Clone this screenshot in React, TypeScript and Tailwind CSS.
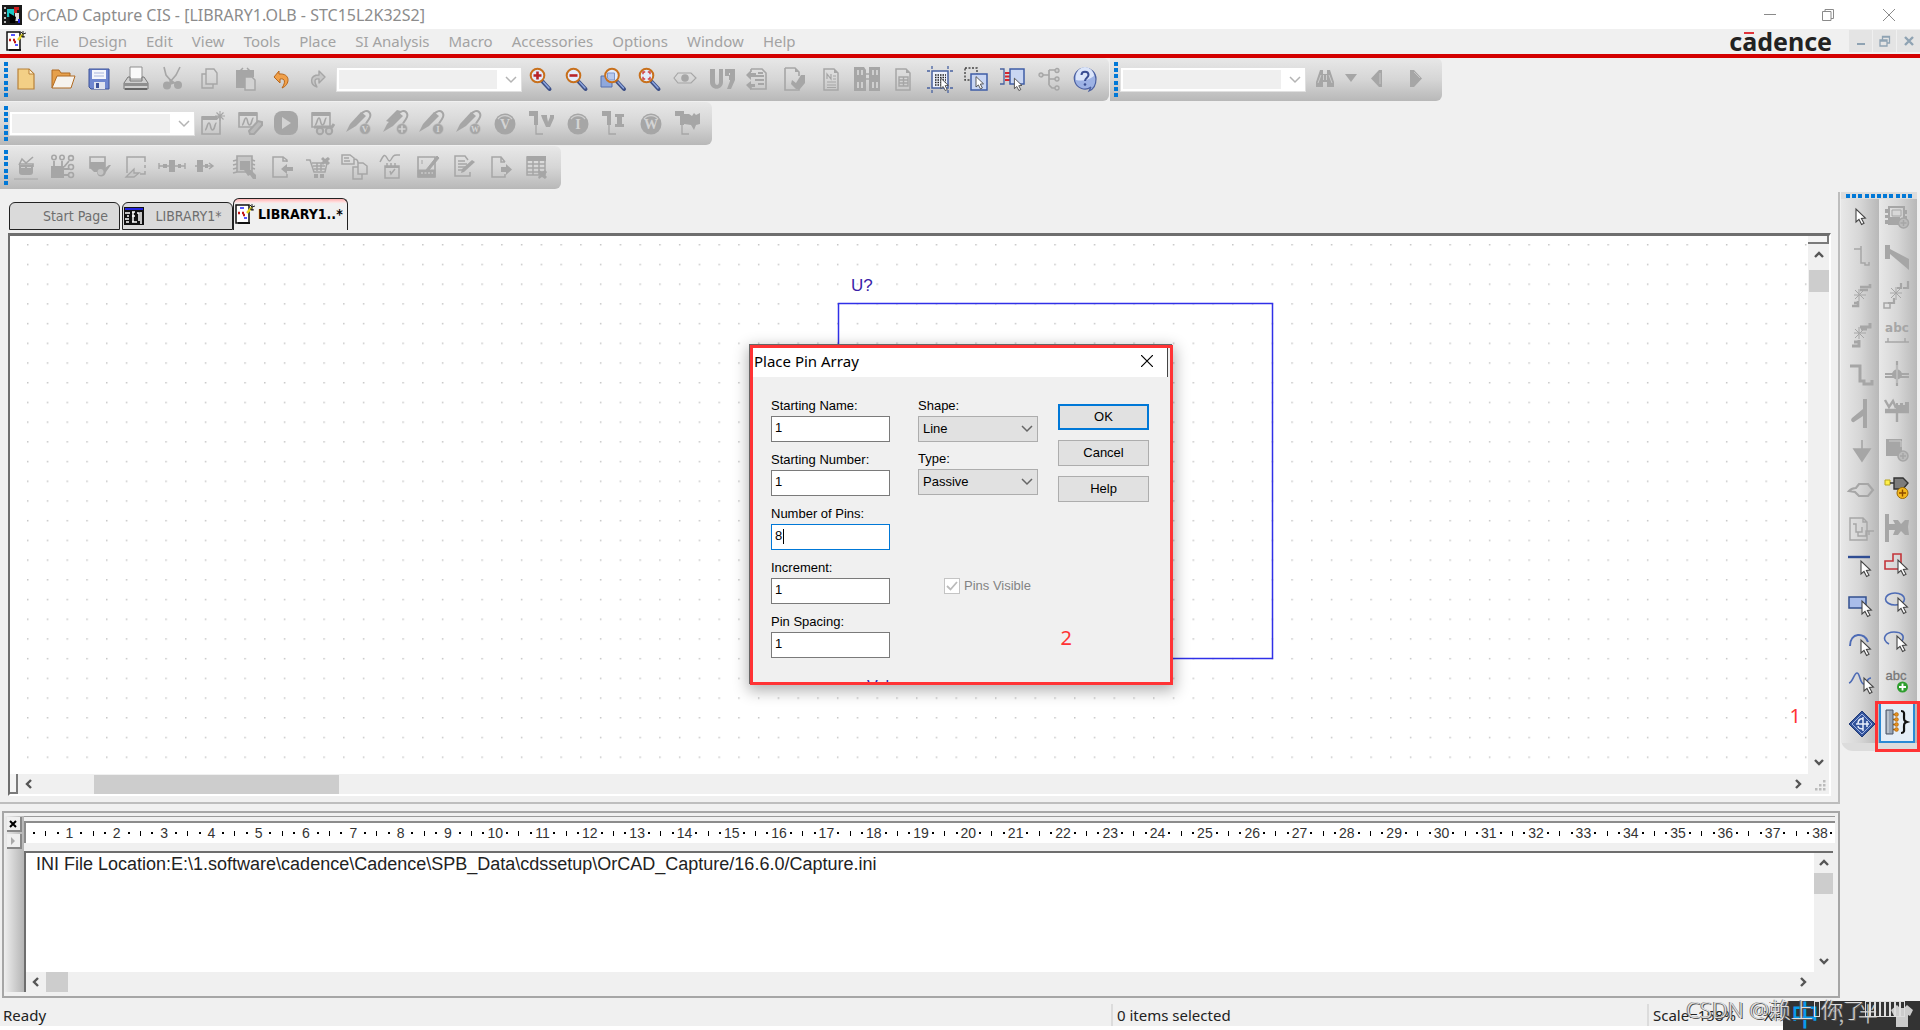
import { useState, type ReactNode } from 'react';

const MENU_ITEMS = [
  'File',
  'Design',
  'Edit',
  'View',
  'Tools',
  'Place',
  'SI Analysis',
  'Macro',
  'Accessories',
  'Options',
  'Window',
  'Help',
];

const GRAY = '#a6a6a6';

interface Tool {
  name: string;
  art: ReactNode;
}

const Cursor = ({ x = 10, y = 8 }: { x?: number; y?: number }) => (
  <path
    d="M0 0v13l3-2.6 2.6 5 2.4-1.2-2.6-4.8 4-.4z"
    transform={`translate(${x} ${y})`}
    fill="#fff"
    stroke="#444"
    strokeWidth="1.1"
  />
);

const Glyph = ({ x, y, size, fill, children }: { x: number; y: number; size: number; fill: string; children: string }) => (
  <text x={x} y={y} fontSize={size} fill={fill} textAnchor="middle" fontWeight="bold" fontFamily="Liberation Serif, serif">
    {children}
  </text>
);

const Magnifier = ({ children }: { children?: ReactNode }) => (
  <>
    <path d="M14.5 14.5l7 7.5" stroke="#3c4f86" strokeWidth="4" strokeLinecap="round" />
    <path d="M15.5 15l5.5 6" stroke="#8ea6de" strokeWidth="1.5" strokeLinecap="round" />
    <circle cx="9.5" cy="8.5" r="6.8" fill="#e3ecfb" stroke="#c8701c" strokeWidth="2" />
    {children}
  </>
);

const Probe = ({ children }: { children: ReactNode }) => (
  <>
    <path d="M-1 21l4-8L14 1l5 4L9 15z" fill={GRAY} />
    <path d="M14 3c3-3 6-4 8-2s2 4 0 7l-4 6" fill="none" stroke={GRAY} strokeWidth="2" />
    <circle cx="18" cy="18" r="5.5" fill={GRAY} stroke="#c9c9c9" strokeWidth=".6" />
    {children}
  </>
);

const BiasTip = ({ children }: { children: ReactNode }) => (
  <>
    <path d="M-1 0h9v14H4V5h-5z" fill={GRAY} />
    <path d="M6 13v10h7" fill="none" stroke={GRAY} strokeWidth="1.3" />
    {children}
  </>
);

const Coin = ({ letter }: { letter: string }) => (
  <>
    <circle cx="12" cy="13" r="10.5" fill={GRAY} />
    <path d="M5 8a9 9 0 0114 0" fill="none" stroke="#cfcfcf" strokeWidth="1.2" />
    <Glyph x={12} y={18} size={14} fill="#d4d4d4">
      {letter}
    </Glyph>
  </>
);

const Wave = ({ x = 0, y = 0 }: { x?: number; y?: number }) => (
  <path
    d="M0 8c2 0 2-7 4-7s1 7 3.5 7 2-7 4-7"
    transform={`translate(${x} ${y})`}
    fill="none"
    stroke={GRAY}
    strokeWidth="1.6"
  />
);

const FILE_TOOLS: Tool[] = [
  {
    name: 'New',
    art: (
      <>
        <path d="M4 2h11l5 5v15H4z" fill="#f3cf86" stroke="#b8813a" strokeWidth="1.2" />
        <path d="M15 2v5h5z" fill="#fff1cf" stroke="#b8813a" />
      </>
    ),
  },
  {
    name: 'Open',
    art: (
      <>
        <path d="M1 21V3h7l2 3h9v6" fill="#e6a04c" stroke="#b06a22" />
        <path d="M1 21L6 9h18l-4 12z" fill="#f6f3ee" stroke="#b06a22" />
      </>
    ),
  },
  {
    name: 'Save',
    art: (
      <>
        <path d="M2 2h20v20H4l-2-2z" fill="#6f87cf" stroke="#3c529a" />
        <path d="M5 3h14v9H5z" fill="#f4f6fc" />
        <path d="M7 6h10M7 9h10" stroke="#a9b6dd" />
        <path d="M7 15h11v7H7z" fill="#dfe3ef" />
        <path d="M9 16h3v5H9z" fill="#3c529a" />
      </>
    ),
  },
  {
    name: 'Print',
    art: (
      <>
        <path d="M6 0h12v12H6z" fill="#fafafa" stroke="#8f8f8f" />
        <path d="M4 10l-4 6v6h24v-6l-4-6h-2v4H6v-4z" fill="#cfcfcf" stroke="#777" />
        <path d="M0 16h24v3H0z" fill="#8f8f8f" />
        <path d="M1 22h22" stroke="#666" strokeWidth="2" />
      </>
    ),
  },
  {
    name: 'Cut',
    art: (
      <>
        <path d="M4 0l2 8 6 7M20 0l-4 8-6 7" fill="none" stroke={GRAY} strokeWidth="1.6" />
        <circle cx="7" cy="18.5" r="4" fill={GRAY} />
        <circle cx="18" cy="18" r="4" fill={GRAY} />
        <path d="M9 11l7 5-6 2z" fill={GRAY} />
      </>
    ),
  },
  {
    name: 'Copy',
    art: (
      <>
        <path d="M10 2h8l3 4v11H10z" fill="none" stroke={GRAY} strokeWidth="1.4" />
        <path d="M10 7H6v14h11v-4" fill="none" stroke={GRAY} strokeWidth="1.4" />
      </>
    ),
  },
  {
    name: 'Paste',
    art: (
      <>
        <path d="M3 3h18v7h-9v11H3z" fill={GRAY} />
        <path d="M7 4l3-3M17 4l-3-3" stroke={GRAY} strokeWidth="1.5" />
        <path d="M12 10h7l3 3v10H12z" fill="#d2d2d2" stroke={GRAY} strokeWidth="1.5" />
      </>
    ),
  },
  {
    name: 'Undo',
    art: (
      <path
        d="M10 4L5 10l6 6v-4c5-1 6 3 2 9 8-3 9-15-3-14z"
        fill="#f0a04a"
        stroke="#b8661a"
        strokeLinejoin="round"
      />
    ),
  },
  {
    name: 'Redo',
    art: (
      <path
        d="M13 4l6 6-6 6v-4c-5-1-5 3-2 8C4 18 3 8 13 8z"
        fill="#c6c6c6"
        stroke={GRAY}
        strokeWidth="1.4"
        strokeLinejoin="round"
      />
    ),
  },
];

const VIEW_TOOLS: Tool[] = [
  {
    name: 'Zoom in',
    art: (
      <Magnifier>
        <path d="M5.5 8.5h8M9.5 4.5v8" stroke="#b82328" strokeWidth="2.6" />
      </Magnifier>
    ),
  },
  {
    name: 'Zoom out',
    art: (
      <Magnifier>
        <path d="M5.5 8.5h8" stroke="#b82328" strokeWidth="2.6" />
      </Magnifier>
    ),
  },
  {
    name: 'Zoom to region',
    art: (
      <>
        <path d="M0 9h11v11H0z" fill="#8fa8dc" stroke="#5770ae" />
        <g transform="translate(1.5 0)">
          <Magnifier>
            <path d="M5 6h7v7H7a6 6 0 01-2-2z" fill="#b7c9ee" stroke="#7f97cc" />
          </Magnifier>
        </g>
      </>
    ),
  },
  {
    name: 'Zoom to all',
    art: (
      <Magnifier>
        <path d="M6 7.2V5h2.2M10.8 5H13v2.2M13 9.800V12h-2.200M8.200 12H6V9.800" fill="none" stroke="#d0393e" strokeWidth="1.4" />
      </Magnifier>
    ),
  },
  {
    name: 'Fisheye view',
    art: (
      <>
        <path d="M1 11l4-5h13l5 5-5 5H5z" fill="none" stroke={GRAY} strokeWidth="1.2" />
        <circle cx="12" cy="11" r="3.8" fill={GRAY} />
      </>
    ),
  },
  {
    name: 'Annotate',
    art: (
      <path
        d="M0 2h5v13c0 4 4 4 4 0V2h4v13c0 9-13 9-13 0zM15 2h10v11l-4 9h-4l3-8v-1h-1V8h1V6h-1v3h-4z"
        fill={GRAY}
      />
    ),
  },
  {
    name: 'Back annotate',
    art: (
      <>
        <path d="M5 2h11l4 4v16H5v-3M5 2v3" fill="none" stroke={GRAY} strokeWidth="1.6" />
        <path d="M0 8l5-5v3h5v4H5v3zM0 18l5-4v3h4v3H5v3z" fill={GRAY} />
        <path d="M9 9h9M12 6h5M9 13h9M12 17h6" stroke={GRAY} strokeWidth="2" />
      </>
    ),
  },
  {
    name: 'Design rules check',
    art: (
      <>
        <path d="M3 1h10l4 4v4M3 1v22h14v-3" fill="none" stroke={GRAY} strokeWidth="1.6" />
        <path d="M13 1v4h4z" fill={GRAY} />
        <path d="M10 13l4 3 5-8 4 0v8l-5 6h-4l-5-5z" fill={GRAY} />
      </>
    ),
  },
  {
    name: 'Create netlist',
    art: (
      <>
        <path d="M5 2h10l4 4v17H5z" fill="none" stroke={GRAY} strokeWidth="1.5" />
        <path d="M15 2v4h4z" fill={GRAY} />
        <path d="M8 12V7l4 5V7M14 9h3M14 12h3M8 15h9M8 18h9M8 20.5h9" fill="none" stroke={GRAY} strokeWidth="1.2" />
      </>
    ),
  },
  {
    name: 'Cross reference parts',
    art: (
      <>
        <path d="M-1 0h10l2 3v21H-1zM14 0h11v24H14z" fill={GRAY} />
        <path d="M2 3h2v5H2zM6 3h2v5H6zM2 15h2v6H2zM6 15h2v6H6zM17 3h2v5h-2zM21 3h2v5h-2zM17 15h2v6h-2zM21 15h2v6h-2z" fill="#cfcfcf" />
        <path d="M10 7h4M10 12h4" stroke={GRAY} strokeWidth="1.3" />
      </>
    ),
  },
  {
    name: 'Bill of materials',
    art: (
      <>
        <path d="M5 2h10l4 4v17H5z" fill="none" stroke={GRAY} strokeWidth="1.5" />
        <path d="M15 2v4h4z" fill={GRAY} />
        <path d="M8 10h9v9H8zM8 13h9M8 16h9M12.5 10v9" fill="none" stroke={GRAY} strokeWidth="1.4" />
      </>
    ),
  },
  {
    name: 'Snap to grid',
    art: (
      <>
        <path d="M4-1v3M4 23v3M20-1v3M20 23v3M-1 4h3M22 4h3M-1 21h3M22 21h3" stroke="#4862a0" strokeWidth="1.3" />
        <path d="M4 4h16v17H4z" fill="#eef2fb" stroke="#4862a0" strokeWidth="1.5" />
        <path d="M7 8h11M7 10.5h11M7 13h11M7 15.5h11M7 18h11" stroke="#222" strokeWidth="1.5" strokeDasharray="1.5 1" />
        <g transform="scale(.8)">
          <Cursor x={16} y={14} />
        </g>
      </>
    ),
  },
  {
    name: 'Area select',
    art: (
      <>
        <path d="M1 1h12v12H1z" fill="none" stroke="#444" strokeWidth="1.4" strokeDasharray="2 1.5" />
        <path d="M7 7h16v16H7z" fill="#c9d6f3" stroke="#3f5da6" strokeWidth="1.5" />
        <g transform="scale(.8)">
          <Cursor x={15} y={12} />
        </g>
      </>
    ),
  },
  {
    name: 'Drag connected object',
    art: (
      <>
        <path d="M0 2h4v15H0" fill="none" stroke="#4862a0" strokeWidth="1.3" />
        <path d="M5 6h5M5 9.5h5M5 13h5" stroke="#d8252b" strokeWidth="2" />
        <path d="M10 2h14v15H10z" fill="#c9d6f3" stroke="#3f5da6" strokeWidth="1.5" />
        <g transform="scale(.8)">
          <Cursor x={18} y={14} />
        </g>
      </>
    ),
  },
  {
    name: 'Project manager',
    art: (
      <>
        <path d="M5 8h7M12 3v15M12 3h8M12 12h8M12 18l3 3h5" fill="none" stroke={GRAY} strokeWidth="1.7" />
        <g fill="#ccc" stroke={GRAY} strokeWidth="1.3">
          <circle cx="4" cy="8" r="2" />
          <circle cx="20" cy="3.5" r="2" />
          <circle cx="20" cy="12" r="2" />
          <circle cx="20" cy="21" r="2" />
        </g>
      </>
    ),
  },
  {
    name: 'Help topics',
    art: (
      <>
        <path d="M12 1a10.5 10.5 0 106 19l-2 4c5-2 7-7 7-12A11 11 0 0012 1z" fill="#9db2e4" stroke="#4a5fa0" strokeWidth="1.2" />
        <path d="M3 9a9 9 0 0118 0 22 22 0 01-18 4z" fill="#dbe5fa" />
        <path d="M8.500 8c0-4.500 7-4.500 7 0 0 2.500-3.500 3-3.500 6" fill="none" stroke="#3a4e92" strokeWidth="2" />
        <circle cx="12" cy="17.5" r="1.3" fill="#3a4e92" />
      </>
    ),
  },
];

const SIM_TOOLS: Tool[] = [
  {
    name: 'New simulation profile',
    art: (
      <>
        <path d="M1 6h18v17H1z" fill="none" stroke={GRAY} strokeWidth="1.6" />
        <path d="M1 5h15v4H1z" fill={GRAY} />
        <Wave x={4} y={11} />
        <path d="M19 0v10M14 5h10M15.5 1.5l7 7M22.5 1.5l-7 7" stroke={GRAY} strokeWidth="1.1" />
      </>
    ),
  },
  {
    name: 'Edit simulation profile',
    art: (
      <>
        <path d="M1 2h18v14H1z" fill="none" stroke={GRAY} strokeWidth="1.6" />
        <path d="M1 1h18v4H1z" fill={GRAY} />
        <Wave x={4} y={6} />
        <path d="M11 20L20 10l4 1v3l-8 9h-4z" fill="#b9b9b9" stroke={GRAY} strokeWidth="2" />
      </>
    ),
  },
  {
    name: 'Run PSpice',
    art: (
      <>
        <rect x="0" y="0" width="24" height="24" rx="8" fill={GRAY} />
        <path d="M8 6v12l9-6z" fill="#d2d2d2" />
      </>
    ),
  },
  {
    name: 'View simulation results',
    art: (
      <>
        <path d="M1 2h18v14H1z" fill="none" stroke={GRAY} strokeWidth="1.6" />
        <path d="M1 1h18v4H1z" fill={GRAY} />
        <Wave x={4} y={6} />
        <path d="M3 16h18l2-3" fill="none" stroke={GRAY} strokeWidth="3" />
        <circle cx="9" cy="20" r="3.2" fill="#c4c4c4" stroke={GRAY} strokeWidth="2" />
        <circle cx="18" cy="20" r="3.2" fill="#c4c4c4" stroke={GRAY} strokeWidth="2" />
      </>
    ),
  },
  {
    name: 'Voltage marker',
    art: (
      <Probe>
        <Glyph x={18} y={21} size={9} fill="#d4d4d4">
          V
        </Glyph>
      </Probe>
    ),
  },
  {
    name: 'Voltage differential marker',
    art: (
      <>
        <path d="M2 10L13-1l4 1-9 12z" fill={GRAY} />
        <Probe>
          <path d="M14.5 18h7M18 14.5v7" stroke="#d4d4d4" strokeWidth="1.6" />
        </Probe>
      </>
    ),
  },
  {
    name: 'Current marker',
    art: (
      <Probe>
        <Glyph x={18} y={21} size={9} fill="#d4d4d4">
          I
        </Glyph>
      </Probe>
    ),
  },
  {
    name: 'Power marker',
    art: (
      <Probe>
        <Glyph x={18} y={21} size={8} fill="#d4d4d4">
          W
        </Glyph>
      </Probe>
    ),
  },
  { name: 'Enable bias voltage display', art: <Coin letter="V" /> },
  {
    name: 'Toggle voltage on net',
    art: (
      <BiasTip>
        <path d="M11 4h6v2l1 5 2-5V4h4v3l-4 9h-4L12 7z" fill={GRAY} />
      </BiasTip>
    ),
  },
  { name: 'Enable bias current display', art: <Coin letter="I" /> },
  {
    name: 'Toggle current on pin',
    art: (
      <BiasTip>
        <path d="M12 3h9v3h-2v7h2v3h-9v-3h2V6h-2z" fill={GRAY} />
      </BiasTip>
    ),
  },
  { name: 'Enable bias power display', art: <Coin letter="W" /> },
  {
    name: 'Toggle power on part',
    art: (
      <BiasTip>
        <path d="M8 3h5l3 2 2-3 2 2 4-2v11l-4 1-2 5-3-5-7-1z" fill={GRAY} />
      </BiasTip>
    ),
  },
];

const PART_TOOLS: Tool[] = [
  {
    name: 'Place database part',
    art: (
      <>
        <path d="M5 10h14v7a3 3 0 01-3 3H8a3 3 0 01-3-3z" fill={GRAY} />
        <path d="M5 10l3-6 4 4 7-6M6 9h13v3" fill="none" stroke={GRAY} strokeWidth="1.6" />
        <path d="M7 12.5h4M13 12.5h4" stroke="#cfcfcf" />
        <path d="M0 24h24" stroke={GRAY} />
      </>
    ),
  },
  {
    name: 'Part manager',
    art: (
      <>
        <path d="M0 11h13v12H0z" fill={GRAY} />
        <path d="M3 11V6M11 11V6M18 6l-5 6M13 14h5M13 20h5" stroke={GRAY} strokeWidth="1.8" />
        <g fill="none" stroke={GRAY} strokeWidth="1.6">
          <circle cx="3" cy="2.5" r="2.2" />
          <circle cx="11" cy="2.5" r="2.2" />
          <circle cx="20" cy="3" r="2.4" />
          <circle cx="20" cy="12" r="2.5" />
          <circle cx="20" cy="20" r="2.5" />
        </g>
      </>
    ),
  },
  {
    name: 'Update part status',
    art: (
      <>
        <path d="M3 2h15v11H3z" fill="none" stroke={GRAY} strokeWidth="1.6" />
        <path d="M3 7h15v6l4-3h2l-5 7c-1 6-9 6-9 0H7l-4-4z" fill={GRAY} />
        <circle cx="13.500" cy="17" r="3" fill="#c4c4c4" />
      </>
    ),
  },
  {
    name: 'Derive database part',
    art: (
      <>
        <path d="M3 18V2h18v5M21 10v3M21 16v3h-5" fill="none" stroke={GRAY} strokeWidth="1.5" />
        <path d="M2 22l8-8v4h5l-5 4z" fill="#c6c6c6" stroke={GRAY} strokeWidth="1.3" />
      </>
    ),
  },
  {
    name: 'Link database part',
    art: (
      <>
        <path d="M-1 8v6M25 8v6M-1 11h26" stroke={GRAY} strokeWidth="1.4" />
        <path d="M9 5h6v12H9zM3 9h4v4H3zM18 9h3v4h-3z" fill={GRAY} />
      </>
    ),
  },
  {
    name: 'View database part',
    art: (
      <>
        <path d="M-2 11h17M12 8l4 3-4 3" fill="none" stroke={GRAY} strokeWidth="1.4" />
        <path d="M0 5h6v12H0zM8 9h3v4H8z" fill={GRAY} />
      </>
    ),
  },
  {
    name: 'Synchronize part',
    art: (
      <>
        <path d="M4 1h15v16H4z" fill="#c6c6c6" stroke={GRAY} strokeWidth="1.6" />
        <path d="M7 6h10v9H7z" fill={GRAY} />
        <path d="M0 6l4-1M0 10l4-1M0 14l4-1M0 18l4-1M19 5l3 1M19 9l3 1M19 13l3 1" stroke={GRAY} strokeWidth="1.8" />
        <path d="M11 15h7l5 5v4h-3l-3-4-2 1z" fill={GRAY} />
      </>
    ),
  },
  {
    name: 'Import part',
    art: (
      <>
        <path d="M17 7V5l-4-3H3v20h14v-3M13 2v4h4" fill="none" stroke={GRAY} strokeWidth="1.5" />
        <path d="M11 14l6-5v3h6v4h-6v3z" fill={GRAY} />
      </>
    ),
  },
  {
    name: 'Part cart',
    art: (
      <>
        <path d="M0 5h4l4 12h11l2-9H6M7 11h12M8 14h11M11 8v8M15 8v8" fill="none" stroke={GRAY} strokeWidth="1.5" />
        <path d="M8 19h4v4H8zM14 19h4v4h-4zM17 2l2 2 3-2 2 2-2 2 2 2-2 2-3-2-2 2-2-2 2-2-2-2z" fill={GRAY} />
      </>
    ),
  },
  {
    name: 'Copy properties',
    art: (
      <>
        <path d="M0 0h8l4 3v6H0zM2 3h5M2 6h6M12 4c3 0 4 2 4 4" fill="none" stroke={GRAY} strokeWidth="1.5" />
        <path d="M16 8h5l4 3v8h-9zM16 12h-5v12h9v-5" fill="none" stroke={GRAY} strokeWidth="1.5" />
      </>
    ),
  },
  {
    name: 'Check signal',
    art: (
      <>
        <path d="M1 7c4-8 5-8 7-4s3 4 5 0 4-3 8-3" fill="none" stroke={GRAY} strokeWidth="1.5" />
        <path d="M6 11h14v12H6zM11 16l1 3 4-5" fill="none" stroke={GRAY} strokeWidth="1.5" />
        <path d="M6 11h14v2H6z" fill={GRAY} />
        <path d="M8 8v4M12 8v4M16 8v4" stroke={GRAY} strokeWidth="1.500" />
      </>
    ),
  },
  {
    name: 'Edit drawing',
    art: (
      <>
        <path d="M3 2h17v20H3z" fill="none" stroke={GRAY} strokeWidth="1.6" />
        <path d="M7 5v4M3 15h8L22 1l2 2-10 12h6v7H3z" fill={GRAY} stroke={GRAY} />
        <path d="M6 18h12" stroke="#c9c9c9" strokeWidth="1.3" strokeDasharray="2 1.5" />
      </>
    ),
  },
  {
    name: 'Edit notes',
    art: (
      <>
        <path d="M16 5l-3-4H3v20h15v-4M6 6h7M6 9h9M6 12h7M6 15h5" fill="none" stroke={GRAY} strokeWidth="1.5" />
        <path d="M9 18l1-4L20 5l3 2-11 10z" fill={GRAY} />
      </>
    ),
  },
  {
    name: 'Export part',
    art: (
      <>
        <path d="M17 7l-4-5H4v20h13v-3M13 2v5h4" fill="none" stroke={GRAY} strokeWidth="1.5" />
        <path d="M13 12h5V9l6 5.5-6 5.5v-3h-5z" fill={GRAY} />
      </>
    ),
  },
  {
    name: 'Parts table',
    art: (
      <>
        <path d="M2 2h18v18H2zM2 9h18M2 13h18M2 17h18M8 4v16M14 4v16" fill="none" stroke={GRAY} strokeWidth="1.5" />
        <path d="M2 1h19v5H2zM14 15l3 2 3-2 2 2-2 3 2 2-2 2-3-2-3 2-1-2 2-2-2-3z" fill={GRAY} />
      </>
    ),
  },
];

const SEARCH_TOOLS: Tool[] = [
  {
    name: 'Find',
    art: (
      <>
        <path d="M7 3h3v4h4V3h3l4 12v5h-7v-5h-4v5H3v-5z" fill={GRAY} />
        <path d="M8 8l-3 8M16 8l3 8M10.500 8v5M13.500 8v5" stroke="#ccc" />
      </>
    ),
  },
  { name: 'Find options', art: <path d="M6 7h12l-6 8z" fill={GRAY} /> },
  {
    name: 'Previous',
    art: (
      <>
        <path d="M17 3v17h-3l-8-8.500L14 3z" fill={GRAY} />
        <path d="M15 6v11" stroke="#c6c6c6" />
      </>
    ),
  },
];

const NEXT_TOOL: Tool[] = [
  {
    name: 'Next',
    art: (
      <>
        <path d="M6 3v17h4l8-8.500L10 3z" fill={GRAY} />
        <path d="M10 5l6 6" stroke="#c6c6c6" />
      </>
    ),
  },
];

const DRAW_TOOLS: [Tool, Tool][] = [
  [
    { name: 'Select', art: <Cursor x={6} y={3} /> },
    {
      name: 'Place part',
      art: (
        <>
          <path d="M4 1h15v17H4z" fill="none" stroke={GRAY} strokeWidth="2" />
          <path d="M7 4h9v6H7z" fill="#d8d8d8" stroke={GRAY} />
          <path d="M0 3h3v4H0zM0 9h3v3H0zM0 14h3v4H0zM4 11h11v8H4zM19 4h3v4h-3zM19 10h3v3h-3z" fill={GRAY} />
          <circle cx="18.5" cy="17" r="5" fill="#bbb" stroke={GRAY} strokeWidth="1.6" />
          <path d="M15.5 17h6M18.5 14v6" stroke={GRAY} strokeWidth="1.5" />
        </>
      ),
    },
  ],
  [
    { name: 'Place wire', art: <path d="M4 4h7V1M11 4v14h4v2h4v-3" fill="none" stroke={GRAY} strokeWidth="1.5" /> },
    { name: 'Auto wire', art: <path d="M0 0h5v4l19 10v11L5 9v5H0z" fill={GRAY} /> },
  ],
  [
    {
      name: 'Auto wire two points',
      art: (
        <>
          <path d="M10 3h10V0M10 6h8M2 22h6v-5M4 19h4" fill="none" stroke={GRAY} strokeWidth="2.6" />
          <path d="M9 5v12M4 11h12M5 6l9 9M14 6l-9 9" stroke={GRAY} />
        </>
      ),
    },
    {
      name: 'Auto wire to bus',
      art: (
        <>
          <path d="M12 5h4V0M18 5h5v-7M3 20h6v-5" fill="none" stroke={GRAY} strokeWidth="2.200" />
          <path d="M-1 20h6v5h-6z" fill="none" stroke={GRAY} strokeWidth="1.500" />
          <path d="M11 4v13M5 10h12M6 5l10 10M16 5L6 15" stroke={GRAY} />
        </>
      ),
    },
  ],
  [
    {
      name: 'Auto wire multiple',
      art: (
        <>
          <path d="M10 4h10V0M11 6h6M2 23h7v-6M4 19h6" fill="none" stroke={GRAY} strokeWidth="3" />
          <path d="M9 4v12M4 10h12M5 6l9 9M14 6l-9 9" stroke={GRAY} />
        </>
      ),
    },
    {
      name: 'Place net alias',
      art: (
        <>
          <text x="12" y="10" fontSize="12" fontWeight="bold" textAnchor="middle" fill={GRAY} fontFamily="DejaVu Sans, sans-serif">
            abc
          </text>
          <path d="M0 20h24M3 16v4M20 16v4" stroke={GRAY} strokeWidth="1.4" />
        </>
      ),
    },
  ],
  [
    { name: 'Place bus', art: <path d="M0 4h10v15h4v3h8v-4" fill="none" stroke={GRAY} strokeWidth="3" /> },
    {
      name: 'Place junction',
      art: (
        <>
          <path d="M0 13h24M0 16h24M12 0v25" stroke={GRAY} strokeWidth="2.2" />
          <circle cx="12" cy="13.5" r="5" fill={GRAY} />
          <path d="M12 4v18" stroke="#ccc" />
        </>
      ),
    },
  ],
  [
    { name: 'Place bus entry', art: <path d="M13-2h4v29h-4V15L4 21c-2 1-4-2-2-4L13 8z" fill={GRAY} /> },
    {
      name: 'Place net group',
      art: (
        <>
          <path d="M0 1l4 7 4-6 3 7M0 11h24M0 13h24M12 13v10" fill="none" stroke={GRAY} strokeWidth="2.4" />
          <path d="M11 4h2v2h2V4h3v2h2V3h4v7H11z" fill={GRAY} />
        </>
      ),
    },
  ],
  [
    { name: 'Place power', art: <path d="M12 0v9M4 9h16l-8 12z" fill={GRAY} stroke={GRAY} strokeWidth="1.6" /> },
    {
      name: 'Place ground',
      art: (
        <>
          <path d="M1 1h16v17H1z" fill={GRAY} />
          <path d="M4 3h12v6" stroke="#ccc" fill="none" />
          <circle cx="18" cy="18" r="5" fill="#bbb" stroke={GRAY} strokeWidth="1.6" />
          <path d="M15 18h6M18 15v6" stroke={GRAY} strokeWidth="1.5" />
        </>
      ),
    },
  ],
  [
    {
      name: 'Place hierarchical block',
      art: <path d="M-1 13c2-2 4-3 7-3l3-4h9l5 6-5 6H9l-4-4z" fill="none" stroke={GRAY} strokeWidth="2.2" />,
    },
    {
      name: 'Place pin',
      art: (
        <>
          <path d="M0 4h5v5H0z" fill="#fff04a" stroke="#b8a51e" />
          <path d="M5 7h4" stroke="#333" strokeWidth="1.5" />
          <path d="M9 2h9l5 5-5 6H9z" fill="#7c7c7c" stroke="#333" strokeWidth="1.4" />
          <circle cx="17.5" cy="17" r="5.5" fill="#f5b91d" stroke="#9b6a06" />
          <path d="M14 17h7M17.5 13.5v7" stroke="#8a4a00" strokeWidth="1.4" />
        </>
      ),
    },
  ],
  [
    {
      name: 'Place port',
      art: <path d="M0 1h13l4 4v18H0zM13 1v4h4M3 7h3v8h6v-5M8 15v4h8v-5h8M19 14v4" fill="none" stroke={GRAY} strokeWidth="1.4" />,
    },
    {
      name: 'Place no connect',
      art: <path d="M0-1h4v10h6l-2-4h5l3 4 4-4h4l-1 7 1 8h-4l-4-4-3 4H8l2-5H4v12H0z" fill={GRAY} />,
    },
  ],
  [
    {
      name: 'Place line',
      art: (
        <>
          <path d="M-2 1h22" stroke="#2f4d93" strokeWidth="2.4" />
          <Cursor x={11} y={5} />
        </>
      ),
    },
    {
      name: 'Place polyline',
      art: (
        <>
          <path d="M0 16V8h8V1h8v15z" fill="none" stroke="#c4353a" strokeWidth="1.6" />
          <Cursor x={13} y={7} />
        </>
      ),
    },
  ],
  [
    {
      name: 'Place rectangle',
      art: (
        <>
          <path d="M-1 2h17v11H-1z" fill="#a9bdea" stroke="#33508f" strokeWidth="1.5" />
          <Cursor x={12} y={6} />
        </>
      ),
    },
    {
      name: 'Place ellipse',
      art: (
        <>
          <ellipse cx="10" cy="7" rx="9.5" ry="6" fill="none" stroke="#4d6bb5" strokeWidth="1.6" />
          <Cursor x={13} y={6} />
        </>
      ),
    },
  ],
  [
    {
      name: 'Place arc',
      art: (
        <>
          <path d="M0 12C0-2 15-2 18 8" fill="none" stroke="#4d6bb5" strokeWidth="2" />
          <Cursor x={11} y={6} />
        </>
      ),
    },
    {
      name: 'Place elliptical arc',
      art: (
        <>
          <path d="M4 13C-5 8 1 1 9 1s11 4 8 9" fill="none" stroke="#4d6bb5" strokeWidth="1.6" />
          <Cursor x={12} y={5} />
        </>
      ),
    },
  ],
  [
    {
      name: 'Place bezier',
      art: (
        <>
          <path d="M-1 10C3 9 4 0 7 0s3 11 7 11 2-6 7-6" fill="none" stroke="#4d6bb5" strokeWidth="1.6" />
          <Cursor x={14} y={5} />
        </>
      ),
    },
    {
      name: 'Place text',
      art: (
        <>
          <text x="11" y="11" fontSize="13" textAnchor="middle" fill="#777" stroke="#777" strokeWidth=".3" fontFamily="Liberation Sans, sans-serif">
            abc
          </text>
          <circle cx="17.5" cy="18" r="5.5" fill="#2f9e2f" />
          <path d="M14 18h7M17.5 14.5v7" stroke="#fff" strokeWidth="1.8" />
        </>
      ),
    },
  ],
  [
    {
      name: 'Place IEEE symbol',
      art: (
        <>
          <path d="M12-1l13 13-13 13L-1 12z" fill="#33549c" stroke="#1e3876" />
          <path d="M12 2l10 10-10 10L2 12z" fill="none" stroke="#9fb4e4" />
          <path d="M13 5v14M8 12c0-6 5-6 5-4M6 12h13M17 9v6M8 14c0 2 3 3 5 3" fill="none" stroke="#e6edfb" strokeWidth="1.5" />
        </>
      ),
    },
    {
      name: 'Place pin array',
      art: (
        <>
          <path d="M1 0h7v24H1z" fill="#9aa6b5" stroke="#4a5566" />
          <path d="M3 1v22" stroke="#c3cbd5" strokeWidth="1.500" />
          <path d="M8 4.500h5M8 9.500h5M8 14.500h5M8 19.500h5" stroke="#8a5a18" strokeWidth="1.3" />
          <g fill="#e8901c" stroke="#a8620e" strokeWidth=".6">
            <circle cx="11.500" cy="4.500" r="1.900" />
            <circle cx="11.500" cy="9.500" r="1.900" />
            <circle cx="11.500" cy="14.500" r="1.900" />
            <circle cx="11.500" cy="19.500" r="1.900" />
          </g>
          <path d="M16 1c4 0 3 3 3 6s0 4 3 5c-3 1-3 2-3 5s1 6-3 6" fill="none" stroke="#111" strokeWidth="2.2" />
        </>
      ),
    },
  ],
];

function Icon({ children }: { children: ReactNode }) {
  return (
    <svg viewBox="0 0 24 24" className="size-6 shrink-0 overflow-visible" fill="none" aria-hidden="true">
      {children}
    </svg>
  );
}

function ToolButtons({ tools, className }: { tools: Tool[]; className: string }) {
  return (
    <div className={`flex h-full items-center ${className}`}>
      {tools.map((tool) => (
        <button key={tool.name} type="button" aria-label={tool.name} className="flex h-full flex-1 items-center justify-center pb-[2px]">
          <Icon>{tool.art}</Icon>
        </button>
      ))}
    </div>
  );
}

function Grip() {
  return (
    <div className="flex h-9 w-1 flex-col justify-between">
      {[0, 1, 2, 3, 4, 5].map((n) => (
        <span key={n} className="size-1 bg-[#0078d7]" />
      ))}
    </div>
  );
}

function Chevron({ className }: { className: string }) {
  return (
    <svg viewBox="0 0 12 8" className={`h-2 w-3 ${className}`} fill="none" stroke="currentColor" strokeWidth="1.5" aria-hidden="true">
      <path d="M1 1l5 5 5-5" />
    </svg>
  );
}

function ToolbarCombo({ label }: { label: string }) {
  return (
    <div className="flex h-[25px] w-[186px] shrink-0 items-center border border-[#e0e0e0] bg-white pl-[2px]">
      <select aria-label={label} className="h-[19px] flex-1 appearance-none bg-[#efefef]" disabled>
        <option />
      </select>
      <Chevron className="mr-1 ml-2 text-[#b4b4b4]" />
    </div>
  );
}

function Toolbar({ children }: { children: ReactNode }) {
  return (
    <div className="flex h-[43px] items-center rounded-r-md bg-linear-to-b from-[#e8e8e8] via-[#d6d6d6] to-[#b8b8b8] pr-[6px] pl-1">
      <Grip />
      {children}
    </div>
  );
}

function PageIcon() {
  return (
    <svg viewBox="0 0 20 22" className="h-[22px] w-5 shrink-0" fill="none" aria-hidden="true">
      <path d="M1 2h13v18H1z" fill="#fff" stroke="#111" strokeWidth="1.5" />
      <path d="M3 20h12" stroke="#111" strokeWidth="2" />
      <path d="M5 5h4M9 15h3" stroke="#2020ff" strokeWidth="1.5" />
      <path d="M3 10h2M7 10h2M8 12h2" stroke="#c01818" strokeWidth="2.4" />
      <path d="M12 10l5-6" stroke="#e8d820" strokeWidth="2.5" />
      <path d="M15 2l2 2 3-1M15 6l4 1M17 1v7" stroke="#222" />
    </svg>
  );
}

function ScrollArrow({ dir, label }: { dir: 'up' | 'down' | 'left' | 'right'; label: string }) {
  const path = {
    up: 'M2 8l4-4 4 4',
    down: 'M2 4l4 4 4-4',
    left: 'M8 2L4 6l4 4',
    right: 'M4 2l4 4-4 4',
  }[dir];
  return (
    <button type="button" aria-label={label} className="flex size-5 shrink-0 items-center justify-center">
      <svg viewBox="0 0 12 12" className="size-3" fill="none" stroke="#555" strokeWidth="2.4" aria-hidden="true">
        <path d={path} />
      </svg>
    </button>
  );
}

function TitleBar() {
  return (
    <header className="flex h-[29px] items-center bg-white pl-[2px]">
      <svg viewBox="0 0 20 20" className="size-5" aria-hidden="true">
        <path d="M0 0h20v20H0z" fill="#1a1a1a" />
        <path d="M2 2h2v2H2zM2 7h2v2H2zM2 12h2v2H2zM2 16h2v2H2z" fill="#bbb" />
        <path d="M5 4h7v8H5z" fill="#18c8c8" />
        <path d="M12 2h5v3h-2v3h-3z" fill="#c82020" />
        <path d="M13 8h4v8h-4z" fill="#ddd" />
        <path d="M16 14h2v4h-2z" fill="#2020e0" />
        <path d="M7 8l7 4-1 6H8z" />
      </svg>
      <h1 className="ml-[5px] flex-1 text-[16px] leading-5 text-[#8c8c8c]">OrCAD Capture CIS - [LIBRARY1.OLB - STC15L2K32S2]</h1>
      <div className="flex h-full text-[#8a8a8a]">
        <button type="button" aria-label="Minimize" className="flex w-[58px] items-center justify-center">
          <svg viewBox="0 0 12 12" className="size-3" stroke="currentColor" aria-hidden="true">
            <path d="M0 5.5h12" />
          </svg>
        </button>
        <button type="button" aria-label="Restore" className="flex w-[58px] items-center justify-center">
          <svg viewBox="0 0 12 12" className="size-3" fill="none" stroke="currentColor" aria-hidden="true">
            <path d="M.5 2.5h8.500v9H.5zM3 2.500v-2h8.500v9H9" />
          </svg>
        </button>
        <button type="button" aria-label="Close" className="flex w-[63px] items-center justify-center">
          <svg viewBox="0 0 12 12" className="size-3" stroke="currentColor" aria-hidden="true">
            <path d="M0 0l12 12M12 0L0 12" />
          </svg>
        </button>
      </div>
    </header>
  );
}

function MenuBar() {
  return (
    <nav className="flex h-[29px] items-center border-b-4 border-[#d40000] pb-[2px] pl-[6px]">
      <PageIcon />
      <div className="ml-[9px] flex flex-1 gap-[19px] text-[15px] leading-5 text-[#a3a3a3]">
        {MENU_ITEMS.map((item) => (
          <button key={item} type="button">
            {item}
          </button>
        ))}
      </div>
      <p className="mr-[17px] text-[25px] leading-6 font-bold text-[#222]">
        c
        <span className="relative">
          a<span className="absolute top-2 left-[2px] h-[2px] w-[10px] bg-[#e0343a]" />
        </span>
        dence
      </p>
      <div className="flex gap-px text-[#8fa3b3]">
        <button type="button" aria-label="Minimize document" className="flex h-[22px] w-[23px] items-center justify-center bg-[#e4e4e4]">
          <svg viewBox="0 0 12 12" className="size-3" stroke="currentColor" strokeWidth="2" aria-hidden="true">
            <path d="M2 9h8" />
          </svg>
        </button>
        <button type="button" aria-label="Restore document" className="flex h-[22px] w-[23px] items-center justify-center bg-[#e4e4e4]">
          <svg viewBox="0 0 12 12" className="size-3" fill="none" stroke="currentColor" strokeWidth="1.3" aria-hidden="true">
            <path d="M1 5h7v6H1zM3.5 5V1.5h7V8H8M1 6h7M4 2h7" />
          </svg>
        </button>
        <button type="button" aria-label="Close document" className="flex h-[22px] w-[23px] items-center justify-center bg-[#e4e4e4]">
          <svg viewBox="0 0 12 12" className="size-3" stroke="currentColor" strokeWidth="2.4" aria-hidden="true">
            <path d="M2 2l8 8M10 2l-8 8" />
          </svg>
        </button>
      </div>
    </nav>
  );
}

function DocumentTabs() {
  return (
    <div className="flex items-end pt-[6px] pl-[9px] font-['DejaVu_Sans_Condensed','DejaVu_Sans',sans-serif] text-[14px] text-[#6e6e6e]">
      <button type="button" className="h-7 w-[111px] rounded-t-md border-[1.5px] border-[#222] bg-[#dadada] pl-[22px]">
        Start Page
      </button>
      <button type="button" className="ml-[2px] flex h-7 w-[111px] items-center rounded-t-md border-[1.5px] border-[#222] bg-[#dadada]">
        <svg viewBox="0 0 20 18" className="mx-px h-[18px] w-5" fill="none" aria-hidden="true">
          <path d="M0 0h20v18H0z" fill="#111" />
          <path d="M1 1h18v2H1z" fill="#2222e0" />
          <path d="M1 6h5M3 9h2M1 12h4M8 5h3M8 9h3M8 15h5M9 5v10M13 6h2v8M17 5v12M2 15h3" stroke="#fff" strokeWidth="1.5" />
        </svg>
        <span className="flex-1 text-center">LIBRARY1*</span>
      </button>
      <button
        type="button"
        className="flex h-8 w-[115px] items-center gap-[3px] rounded-t-md border-[1.5px] border-b-0 border-[#222] bg-linear-to-b from-[#ffb0b0] from-0% via-[#ffe0e0] via-10% to-[#f0f0f0] to-15% pb-px pl-px font-bold text-black"
      >
        <PageIcon />
        <span>LIBRARY1..*</span>
      </button>
    </div>
  );
}

function DialogField({ id, label, value, active }: { id: string; label: string; value: string; active?: boolean }) {
  const [text, setText] = useState(value);
  return (
    <div className="flex flex-col">
      <label htmlFor={id} className="leading-5">
        {label}
      </label>
      <div className={`flex h-[26px] items-center border bg-white pb-[2px] pl-[3px] ${active ? 'border-[#0078d7]' : 'border-[#7a7a7a]'}`}>
        <input
          id={id}
          value={text}
          onChange={(e) => setText(e.target.value)}
          className={`outline-none ${active ? 'w-2' : 'w-full'}`}
        />
        {active && <span className="h-[15px] w-px bg-black" />}
      </div>
    </div>
  );
}

function DialogSelect({ id, label, value }: { id: string; label: string; value: string }) {
  return (
    <div className="flex flex-col">
      <label htmlFor={id} className="leading-5">
        {label}
      </label>
      <div className="relative">
        <select id={id} defaultValue={value} className="h-[26px] w-full appearance-none border border-[#adadad] bg-[#e1e1e1] pl-1">
          <option>{value}</option>
        </select>
        <Chevron className="pointer-events-none absolute top-[9px] right-[5px] text-[#666]" />
      </div>
    </div>
  );
}

function PlacePinArrayDialog() {
  return (
    <section
      role="dialog"
      aria-labelledby="dialog-title"
      className="absolute top-[109px] left-[740px] flex h-[340px] w-[423px] flex-col border-3 border-[#ff3335] bg-[#f0f0f0] font-['Liberation_Sans',Arial,sans-serif] text-[13px] text-black shadow-[-1px_-1px_0_#666,0_4px_14px_2px_rgba(0,0,0,0.3)]"
    >
      <div className="mr-[2px] flex h-[29px] items-center justify-between border-r border-[#444] bg-white pr-[14px] pb-1 pl-px">
        <h2 id="dialog-title" className="font-['Noto_Sans','Noto_Sans_CJK_SC',sans-serif] text-[15px] leading-5">
          Place Pin Array
        </h2>
        <button type="button" aria-label="Close dialog">
          <svg viewBox="0 0 12 12" className="size-3" stroke="#000" strokeWidth="1.2" aria-hidden="true">
            <path d="M0 0l12 12M12 0L0 12" />
          </svg>
        </button>
      </div>
      <form className="flex flex-1 pt-[19px] pl-[18px]" onSubmit={(e) => e.preventDefault()}>
        <div className="flex w-[119px] flex-col gap-2">
          <DialogField id="starting-name" label="Starting Name:" value="1" />
          <DialogField id="starting-number" label="Starting Number:" value="1" />
          <DialogField id="number-of-pins" label="Number of Pins:" value="8" active />
          <DialogField id="increment" label="Increment:" value="1" />
          <DialogField id="pin-spacing" label="Pin Spacing:" value="1" />
        </div>
        <div className="ml-7 flex w-[120px] flex-col gap-[7px]">
          <DialogSelect id="shape" label="Shape:" value="Line" />
          <DialogSelect id="type" label="Type:" value="Passive" />
          <label className="mt-[74px] ml-[26px] flex items-center gap-1 leading-5 whitespace-nowrap text-[#838383]">
            <span className="relative flex">
              <input type="checkbox" defaultChecked disabled className="size-4 appearance-none border border-[#c4c4c4] bg-white" />
              <svg viewBox="0 0 16 16" className="pointer-events-none absolute inset-0 size-4" fill="none" stroke="#bbb" strokeWidth="1.8" aria-hidden="true">
                <path d="M3 8l3.5 3.5L13 4" />
              </svg>
            </span>
            Pins Visible
          </label>
        </div>
        <div className="mt-2 ml-5 flex w-[91px] flex-col gap-[10px]">
          <button type="submit" className="h-[26px] border-2 border-[#0078d7] bg-[#e1e1e1]">
            OK
          </button>
          <button type="button" className="h-[26px] border border-[#adadad] bg-[#e1e1e1]">
            Cancel
          </button>
          <button type="button" className="h-[26px] border border-[#adadad] bg-[#e1e1e1]">
            Help
          </button>
        </div>
      </form>
      <span className="absolute right-[98px] bottom-[30px] font-['Noto_Sans',sans-serif] text-xl leading-7 text-[#ff3335]">2</span>
      <div className="ml-[114px] h-[3px] overflow-hidden text-base leading-4 text-[#2222b0]">Value</div>
    </section>
  );
}

function SchematicCanvas() {
  return (
    <div className="relative flex-1 overflow-hidden bg-white">
      <svg className="absolute inset-0 h-full w-full" aria-hidden="true">
        <defs>
          <pattern id="grid" x="17" y="8" width="19.755" height="19.71" patternUnits="userSpaceOnUse">
            <path d="M0 0h1.5v1.5H0z" fill="#c4c4c4" />
          </pattern>
        </defs>
        <rect width="100%" height="100%" fill="url(#grid)" />
        <rect x="828.5" y="67.5" width="434" height="355" fill="none" stroke="#3030e8" strokeWidth="1.5" />
      </svg>
      <span className="absolute top-[38px] left-[841px] font-['Liberation_Sans',Arial,sans-serif] text-[17px] leading-6 text-[#3a22a8]">U?</span>
      <PlacePinArrayDialog />
      <span className="absolute right-[7px] bottom-11 font-['Noto_Sans',sans-serif] text-xl leading-7 text-[#ff3335]">1</span>
    </div>
  );
}

function DocumentArea() {
  return (
    <div className="flex flex-1 flex-col border-r-2 border-b-2 border-[#bdbdbd] pr-[7px] pb-[6px] pl-2">
      <div className="-ml-2">
        <DocumentTabs />
      </div>
      <div className="mt-[3px] flex flex-1 flex-col border-2 border-t-3 border-[#6e6e6e] border-r-white border-b-white bg-[#f0f0f0]">
        <div className="flex flex-1">
          <SchematicCanvas />
          <div className="flex w-[21px] flex-col items-center pb-[2px]">
            <div className="h-2 w-full border-r-2 border-b-2 border-[#7a7a7a] bg-[#f4f4f4]" />
            <div className="h-px" />
            <ScrollArrow dir="up" label="Scroll sheet up" />
            <div className="mt-[5px] h-[22px] w-5 bg-[#cdcdcd]" />
            <div className="flex-1" />
            <ScrollArrow dir="down" label="Scroll sheet down" />
          </div>
        </div>
        <div className="flex h-5 items-center">
          <div className="mr-px h-5 w-2 border-r-2 border-b-2 border-[#7a7a7a] bg-[#f4f4f4]" />
          <ScrollArrow dir="left" label="Scroll sheet left" />
          <div className="ml-[55px] h-[19px] w-[245px] bg-[#cdcdcd]" />
          <div className="flex-1" />
          <ScrollArrow dir="right" label="Scroll sheet right" />
          <svg viewBox="0 0 12 12" className="mt-1 mr-[2px] ml-[7px] size-3" fill="#bbb" aria-hidden="true">
            <path d="M8 0h2.5v2.5H8zM4 4h2.5v2.5H4zM8 4h2.5v2.5H8zM0 8h2.5v2.5H0zM4 8h2.5v2.5H4zM8 8h2.5v2.5H8z" />
          </svg>
        </div>
      </div>
    </div>
  );
}

function Ruler() {
  const marks = Array.from({ length: 152 }, (_, i) => i + 1);
  return (
    <div className="flex h-5 items-center bg-white pl-[2px] font-['Liberation_Sans_Narrow','Liberation_Sans',sans-serif] text-[14px] leading-5 text-[#333]">
      {marks.map((n) => (
        <div key={n} className="flex min-w-0 flex-1 items-center justify-center">
          {n % 4 === 0 ? (
            <span>{n / 4}</span>
          ) : (
            <span className={n % 4 === 2 ? 'h-[5px] w-px bg-black' : 'size-[2px] bg-black'} />
          )}
        </div>
      ))}
      <div className="flex w-[10px] justify-center">
        <span className="size-[2px] bg-black" />
      </div>
    </div>
  );
}

function SessionLog() {
  return (
    <div className="mt-[7px] ml-[2px] flex h-[187px] border-2 border-[#a6a6a6] bg-[#f0f0f0] pt-[3px] pb-1">
      <div className="flex w-5 flex-col items-center gap-[2px] bg-linear-to-r from-[#efefef] to-[#b5b5b5] pt-px">
        <button type="button" aria-label="Close session log" className="flex size-[15px] items-center justify-center border-r-2 border-b-2 border-[#888] bg-[#f0f0f0]">
          <svg viewBox="0 0 8 8" className="size-2" stroke="#000" strokeWidth="2" aria-hidden="true">
            <path d="M1 1l6 6M7 1L1 7" />
          </svg>
        </button>
        <button type="button" aria-label="Expand session log" className="flex size-[15px] items-center justify-center border-r-2 border-b-2 border-[#888] bg-[#f0f0f0]">
          <svg viewBox="0 0 8 8" className="size-2" fill="#aaa" aria-hidden="true">
            <path d="M2 0l4 4-4 4z" />
          </svg>
        </button>
      </div>
      <div className="mr-[3px] flex flex-1 flex-col border-t border-[#999] pt-1">
        <div className="border-t-2 border-l-2 border-[#8c8c8c]">
          <Ruler />
        </div>
        <div className="mt-2 mr-[2px] flex flex-1 flex-col border-t-2 border-l-2 border-[#6e6e6e]">
          <div className="flex flex-1">
            <p className="flex-1 bg-white pt-px pl-[10px] font-['Liberation_Sans',Arial,sans-serif] text-[18px] leading-5 text-[#222]">
              INI File Location:E:\1.software\cadence\Cadence\SPB_Data\cdssetup\OrCAD_Capture/16.6.0/Capture.ini
            </p>
            <div className="flex w-[19px] flex-col items-center pb-px">
              <ScrollArrow dir="up" label="Scroll log up" />
              <div className="h-[21px] w-[19px] bg-[#cdcdcd]" />
              <div className="flex-1" />
              <ScrollArrow dir="down" label="Scroll log down" />
            </div>
          </div>
          <div className="flex h-5 items-center">
            <ScrollArrow dir="left" label="Scroll log left" />
            <div className="h-5 w-[22px] bg-[#cdcdcd]" />
            <div className="flex-1" />
            <ScrollArrow dir="right" label="Scroll log right" />
            <div className="w-5" />
          </div>
        </div>
      </div>
    </div>
  );
}

function DrawPalette() {
  return (
    <aside className="relative mr-[3px] ml-px h-[559px] w-[76px] rounded-bl-xl bg-[#dcdcdc] pt-[2px]">
      <div className="mx-[5px] flex h-1 justify-between">
        {[0, 1, 2, 3, 4, 5, 6, 7, 8, 9, 10].map((n) => (
          <span key={n} className="size-1 bg-[#0078d7]" />
        ))}
      </div>
      <div className="mt-px flex h-[544px] bg-[#dcdcdc]">
        {[0, 1].map((col) => (
          <div
            key={col}
            className={`flex w-[38px] flex-col bg-linear-to-r from-[#e8e8e8] via-[#d6d6d6] to-[#b8b8b8] ${col === 0 ? 'pl-[3px]' : 'pr-[2px]'}`}
          >
            {DRAW_TOOLS.map((pair) => {
              const tool = pair[col];
              const picked = tool.name === 'Place pin array';
              return (
                <button
                  key={tool.name}
                  type="button"
                  aria-label={tool.name}
                  className={`flex flex-1 items-center justify-center ${picked ? 'border-2 border-[#2a8ad4] bg-[#e5eef7]' : ''}`}
                >
                  <Icon>{tool.art}</Icon>
                </button>
              );
            })}
          </div>
        ))}
      </div>
      <div className="absolute right-[-3px] -bottom-px h-[51px] w-[45px] border-3 border-[#ff3335]" />
    </aside>
  );
}

function StatusBar() {
  return (
    <footer className="relative flex h-8 border-b-4 border-white pl-[3px] text-[15px] leading-5 text-[#222]">
      <p className="flex-1 pt-[7px]">Ready</p>
      <p className="mt-[6px] w-[536px] border-l-2 border-[#dcdcdc] pt-px pl-1">0 items selected</p>
      <p className="mt-[6px] flex w-[273px] gap-7 border-l-2 border-[#dcdcdc] pt-px pl-1">
        <span>Scale=158%</span>
        <span>X=</span>
      </p>
      <div className="absolute right-0 -bottom-1 flex h-[29px] w-[137px] items-center rounded-tl-md bg-[#333] pb-1 pl-2 font-['Noto_Sans_CJK_SC',sans-serif] text-[#bbb]">
        <span className="w-10 text-[28px] leading-6 font-medium text-[#0a9bea]">中</span>
        <span className="w-[27px] text-xl leading-6">°,</span>
        <span className="w-[33px] text-xl leading-6">半</span>
        <svg viewBox="0 0 22 22" className="mt-1 h-[22px] w-[22px]" fill="#ccc" aria-hidden="true">
          <path d="M6 0l3 3h4l3-3 6 5-3 6-2-1v12H5V10l-2 1-3-6z" />
        </svg>
      </div>
      <p className="absolute right-[15px] bottom-[5px] flex items-center font-['Noto_Sans','Noto_Sans_CJK_SC',sans-serif] text-[22px] leading-6 font-light text-[#ddd] [text-shadow:1px_1px_0_#555,-1px_0_0_#777]">
        <span>CSDN @赖上</span>
        <span className="mx-px h-4 w-[6px] border border-[#ddd]" />
        <span>你了</span>
        {[0, 1, 2, 3, 4, 5, 6, 7].map((n) => (
          <span key={n} className="h-4 w-[5px] border border-[#ddd]" />
        ))}
      </p>
    </footer>
  );
}

export default function App() {
  return (
    <div className="flex min-h-screen flex-col bg-[#f0f0f0] font-['Noto_Sans','Noto_Sans_CJK_SC',sans-serif]">
      <TitleBar />
      <MenuBar />
      <div className="flex flex-col items-start gap-px">
        <div className="flex gap-px">
          <Toolbar>
            <ToolButtons tools={FILE_TOOLS} className="w-[328px]" />
            <ToolbarCombo label="Part" />
            <ToolButtons tools={VIEW_TOOLS} className="w-[581px]" />
          </Toolbar>
          <Toolbar>
            <div className="w-[2px]" />
            <ToolbarCombo label="Find text" />
            <ToolButtons tools={SEARCH_TOOLS} className="ml-[6px] w-[78px]" />
            <ToolButtons tools={NEXT_TOOL} className="ml-[6px] w-10" />
          </Toolbar>
        </div>
        <Toolbar>
          <div className="w-px" />
          <ToolbarCombo label="Simulation profile" />
          <ToolButtons tools={SIM_TOOLS} className="w-[511px]" />
        </Toolbar>
        <Toolbar>
          <ToolButtons tools={PART_TOOLS} className="w-[547px]" />
        </Toolbar>
      </div>
      <main className="mt-[3px] flex flex-1 items-start">
        <div className="flex min-w-0 flex-1 flex-col self-stretch">
          <DocumentArea />
          <SessionLog />
        </div>
        <DrawPalette />
      </main>
      <StatusBar />
    </div>
  );
}
